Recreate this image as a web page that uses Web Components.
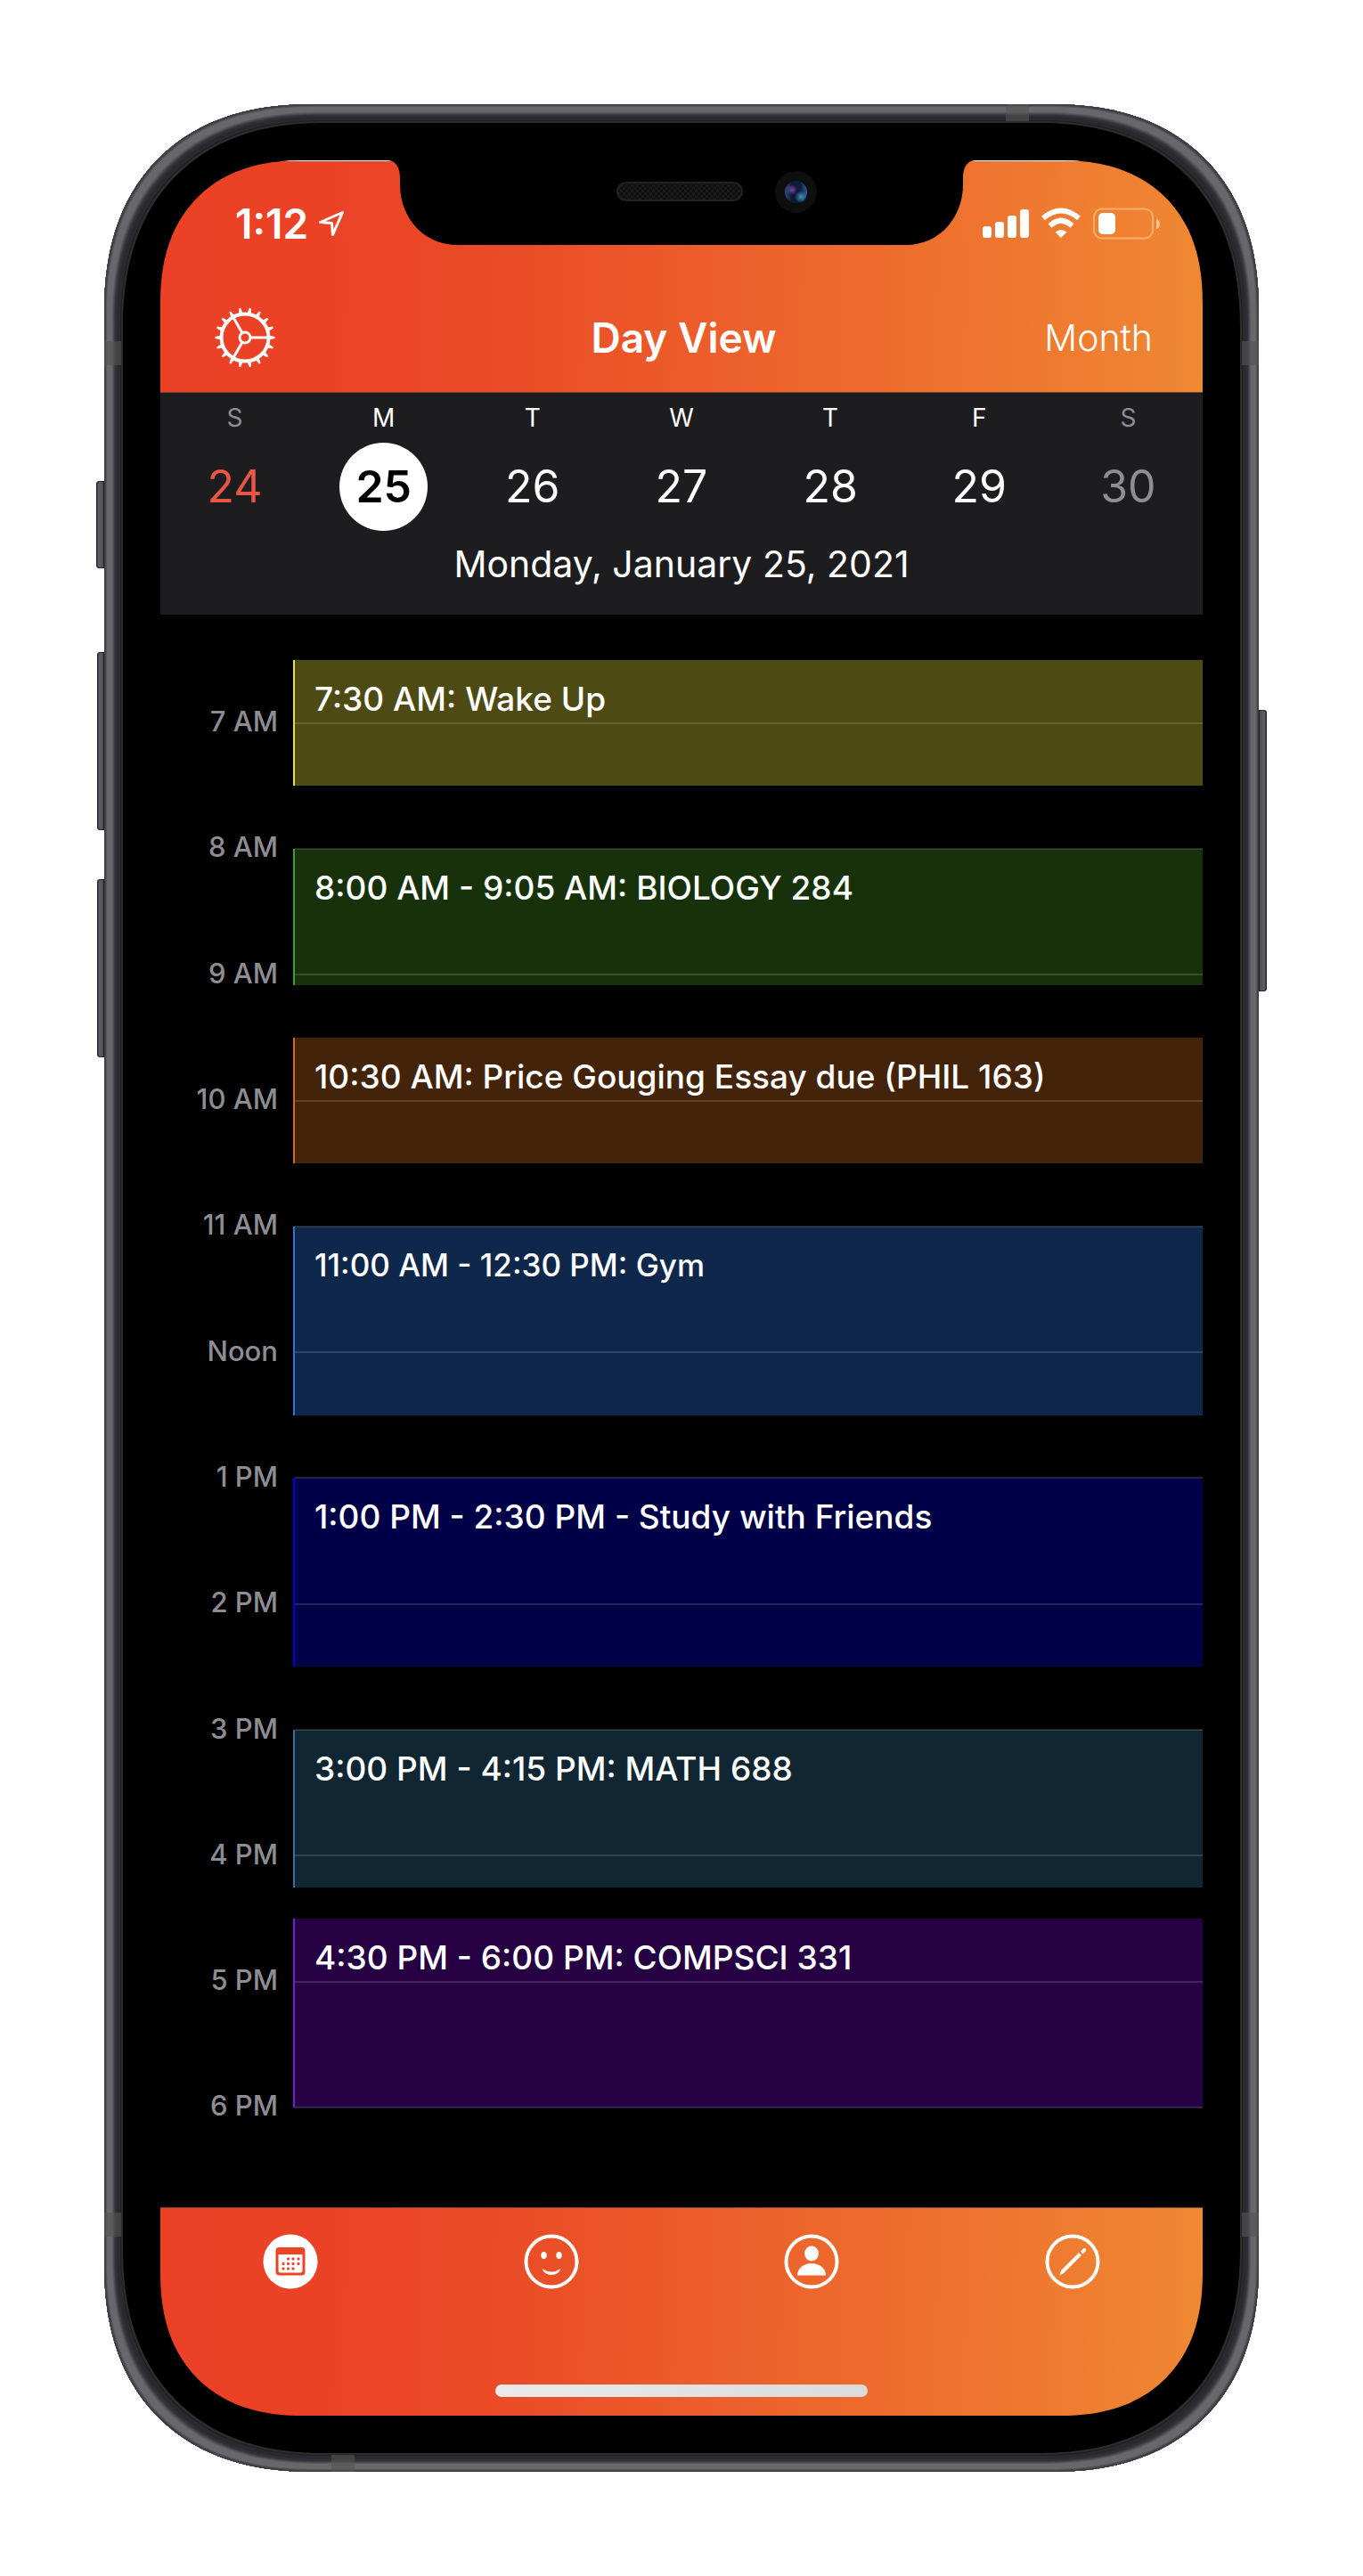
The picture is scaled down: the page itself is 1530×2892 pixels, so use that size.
<!DOCTYPE html>
<html lang="en">
<head>
<meta charset="utf-8">
<meta name="viewport" content="width=device-width, initial-scale=1">
<title>Day View</title>
<style>
  body {
    margin: 0;
    background: #fff;
    font-family: Inter, "Liberation Sans", sans-serif;
    color: #fff;
    --brand: linear-gradient(91deg, #eb4126 0%, #eb4226 16%, #ea4e27 36%, #ec5b2a 50%, #ee722e 76%, #ef8833 100%);
  }
</style>
</head>
<body>
<phone-frame>
  <status-bar time="1:12"></status-bar>
  <nav-bar action="Month">Day View</nav-bar>
  <week-strip first="24" selected="25">Monday, January 25, 2021</week-strip>
  <day-timeline from="6:30" to="18:00">
    <day-event start="6:30" end="7:30" tone="olive">7:30 AM: Wake Up</day-event>
    <day-event start="8:00" end="9:05" tone="green">8:00 AM - 9:05 AM: BIOLOGY 284</day-event>
    <day-event start="9:30" end="10:30" tone="brown">10:30 AM: Price Gouging Essay due (PHIL 163)</day-event>
    <day-event start="11:00" end="12:30" tone="blue" compact>11:00 AM - 12:30 PM: Gym</day-event>
    <day-event start="13:00" end="14:30" tone="navy">1:00 PM - 2:30 PM - Study with Friends</day-event>
    <day-event start="15:00" end="16:15" tone="teal">3:00 PM - 4:15 PM: MATH 688</day-event>
    <day-event start="16:30" end="18:00" tone="purple">4:30 PM - 6:00 PM: COMPSCI 331</day-event>
  </day-timeline>
  <tab-bar></tab-bar>
</phone-frame>

<script>
const mount = (el, html) => { el.attachShadow({ mode: "open" }).innerHTML = html; };
const RESET = `<style>
  :host, * { box-sizing: border-box; }
  button { margin: 0; padding: 0; border: 0; background: none; color: inherit; font: inherit; cursor: pointer; }
  svg { display: block; }
</style>`;
const minutes = t => { const [h, m] = t.split(":").map(Number); return h * 60 + m; };

customElements.define("phone-frame", class extends HTMLElement {
  connectedCallback() {
    mount(this, `${RESET}<style>
      :host { display: block; position: relative; margin: 117px; }
      .body {
        position: relative;
        padding: 63px;
        background: #000;
        border-radius: 206px;
        overflow: hidden;
        box-shadow:
          inset 0 0 0 1px #3b3b3e, inset 0 0 0 2px #48484c, inset 0 0 0 3px #57565b,
          inset 0 0 0 9px #68676c, inset 0 0 0 10px #5b5a5f, inset 0 0 0 11px #4c4b50,
          inset 0 0 0 12px #3e3d43, inset 0 0 0 14px #313037, inset 0 0 0 18px #2a2930,
          inset 0 0 0 19px #1f1f22, inset 0 0 0 21px #2d2c2b;
      }
      .screen {
        display: flex; flex-direction: column;
        background: #000;
        border-radius: 144px;
        overflow: hidden;
      }
      @supports (corner-shape: superellipse(1.2)) {
        .body { border-radius: 234px; corner-shape: superellipse(1.2); }
        .screen { border-radius: 160px; corner-shape: superellipse(1.2); }
      }
      .band { position: absolute; background: #55555599; }
      .band.side { width: 19px; height: 27px; }
      .band.flat { width: 26px; height: 19px; }
      .tl { top: 266px; left: 0; } .tr { top: 266px; right: 0; }
      .bl { bottom: 264px; left: 0; } .br { bottom: 264px; right: 0; }
      .top { top: 0; right: 258px; } .bottom { bottom: 0; left: 255px; }
      .key {
        position: absolute; width: 8px; left: -8px;
        border-radius: 4px 0 0 4px;
        background: linear-gradient(90deg, #2c2b35, #5d5c62 30%, #5d5c62 50%, #434247);
        box-shadow: inset 0 0 0 1px #22212b;
      }
      .mute { top: 423px; height: 98px; width: 9px; left: -9px; }
      .up { top: 615px; height: 200px; }
      .down { top: 870px; height: 200px; }
      .power { top: 680px; height: 316px; width: 9px; left: auto; right: -9px; border-radius: 0 4px 4px 0; background: linear-gradient(270deg, #2c2b35, #5d5c62 30%, #5d5c62 50%, #434247); }
    </style>
    <div class="key mute"></div><div class="key up"></div><div class="key down"></div><div class="key power"></div>
    <div class="body">
      <div class="screen"><slot></slot></div>
      <div class="band side tl"></div><div class="band side tr"></div>
      <div class="band side bl"></div><div class="band side br"></div>
      <div class="band flat top"></div><div class="band flat bottom"></div>
    </div>`);
  }
});

customElements.define("status-bar", class extends HTMLElement {
  connectedCallback() {
    mount(this, `${RESET}<style>
      :host {
        display: grid; grid-template-columns: 1fr 660px 1fr;
        background: linear-gradient(#fff, #fff) top / 100% 1px no-repeat, var(--brand);
      }
      .time { display: flex; align-items: center; gap: 11px; padding: 47px 0 0 84px; font-size: 46px; line-height: 48px; font-weight: 600; }
      .signal { display: flex; align-items: center; padding: 47px 0 0 8px; }
    </style>
    <div class="time"><span>${this.getAttribute("time")}</span>
      <svg width="30" height="30" viewBox="0 0 30 30" fill="none" stroke="#fff" stroke-width="3" stroke-linejoin="round"><path d="M27.500 2.500L2.500 13.500L15.500 14.500L16.500 27.500Z"/></svg>
    </div>
    <svg width="660" height="95" viewBox="0 0 660 95">
      <defs>
        <pattern id="mesh" width="6" height="6" patternUnits="userSpaceOnUse"><rect width="6" height="6" fill="#0f0f0f"/><path d="M0 0h3v3h3v3h-3v-3h-3z" fill="#1a1a1a"/></pattern>
        <radialGradient id="violet"><stop offset="0" stop-color="#7449a8"/><stop offset="1" stop-color="#7449a8" stop-opacity="0"/></radialGradient>
        <radialGradient id="cyan"><stop offset="0" stop-color="#4390b4"/><stop offset="1" stop-color="#4390b4" stop-opacity="0"/></radialGradient>
        <linearGradient id="lens" x1="0" x2="1"><stop offset="0" stop-color="#2b537c"/><stop offset=".3" stop-color="#0e1733"/><stop offset=".7" stop-color="#101c3c"/><stop offset="1" stop-color="#2d5f97"/></linearGradient>
      </defs>
      <path d="M0 0C10 0 14 9 14 20V27C14 66 42 95 78 95H582C618 95 646 66 646 27V20C646 9 650 0 660 0Z"/>
      <rect x="258" y="25" width="140" height="20" rx="10" fill="url(#mesh)" stroke="#222" stroke-width="2"/>
      <circle cx="458.500" cy="35.500" r="23.500" fill="#0e0e0e"/>
      <circle cx="458.500" cy="35.500" r="12.500" fill="url(#lens)"/>
      <circle cx="454" cy="33" r="6" fill="url(#violet)"/>
      <circle cx="464" cy="41" r="7" fill="url(#cyan)"/>
    </svg>
    <div class="signal">
      <svg width="201" height="36" viewBox="0 0 201 36" fill="#fff">
        <rect x="0" y="21" width="10" height="13" rx="3"/><rect x="14" y="16" width="10" height="18" rx="3"/>
        <rect x="28" y="9" width="10" height="25" rx="3"/><rect x="42" y="2" width="10" height="32" rx="3"/>
        <g fill="none" stroke="#fff" stroke-width="6"><path d="M68 12Q88 -5 108 12"/><path d="M75.500 20.500Q88 9 100.500 20.500"/></g>
        <path d="M88 34L81.500 27.500Q88 22.500 94.500 27.500Z"/>
        <rect x="125" y="1.500" width="66" height="33" rx="9" fill="none" stroke="#ffcf90" stroke-opacity=".6" stroke-width="2"/>
        <rect x="130" y="6" width="19" height="24" rx="5"/>
        <path d="M195 12.500Q199 14.500 199 18.500T195 24.500Z" fill="#ffd9a8" fill-opacity=".8"/>
      </svg>
    </div>`);
  }
});

customElements.define("nav-bar", class extends HTMLElement {
  connectedCallback() {
    let teeth = "";
    for (let a = 0; a < 360; a += 20) teeth += `<path d="M60 31.500L67.500 33V35L60 36.500Z" transform="rotate(${a} 34 34)"/>`;
    const spokes = [0, 120, 240].map(a => `<path d="M41 34H60" transform="rotate(${a} 34 34)"/>`).join("");
    mount(this, `${RESET}<style>
      :host { display: grid; grid-template-columns: 1fr auto 1fr; align-items: center; padding: 42px 56px 0 61px; height: 166px; background: var(--brand); border-bottom: 1px solid #7a4a30; }
      h1 { margin: 0; font-size: 46px; line-height: 60px; font-weight: 600; }
      .gear { justify-self: start; }
      .action { justify-self: end; font-size: 41px; line-height: 60px; font-weight: 300; }
    </style>
    <button class="gear" aria-label="Settings"><svg width="68" height="68" viewBox="0 0 68 68" fill="#fff">${teeth}
      <g fill="none" stroke="#fff"><circle cx="34" cy="34" r="26.500" stroke-width="4"/><circle cx="34" cy="34" r="6" stroke-width="3"/><g stroke-width="3">${spokes}</g></g></svg></button>
    <h1><slot></slot></h1>
    <button class="action">${this.getAttribute("action")}</button>`);
  }
});

customElements.define("week-strip", class extends HTMLElement {
  connectedCallback() {
    const first = Number(this.getAttribute("first")), selected = Number(this.getAttribute("selected"));
    const days = [..."SMTWTFS"].map((d, i) => {
      const n = first + i;
      const state = n === selected ? "selected" : i === 0 ? "sunday" : i === 6 ? "saturday" : "";
      return `<button class="${state}"><span class="letter">${d}</span><span class="num">${n}</span></button>`;
    }).join("");
    mount(this, `${RESET}<style>
      :host { display: block; padding: 11px 0 31px; background: #1d1d1f; }
      .days { display: grid; grid-template-columns: repeat(7, 1fr); }
      button { display: flex; flex-direction: column; align-items: center; gap: 11px; }
      .letter { font-size: 28px; line-height: 34px; }
      .num { width: 99px; border-radius: 50%; font-size: 50px; line-height: 99px; text-align: center; }
      .selected .num { background: #fff; color: #000; font-weight: 600; }
      .sunday .letter, .saturday { color: #8e8d94; }
      .sunday .num { color: #eb5545; }
      p { margin: 12px 0 0; text-align: center; font-size: 41px; line-height: 51px; }
    </style>
    <div class="days">${days}</div>
    <p><slot></slot></p>`);
  }
});

customElements.define("day-event", class extends HTMLElement {
  connectedCallback() {
    mount(this, `${RESET}<style>
      :host { display: block; padding: 20px 22px 0; border-left: 2px solid var(--edge); background: var(--fill); font-size: 37px; line-height: 48px; font-weight: 500; white-space: nowrap; overflow: hidden; }
      :host([compact]) { font-size: 35px; line-height: 46px; }
      :host([tone=olive]) { --fill: #4d4b13; --edge: #e4e233; }
      :host([tone=green]) { --fill: #17320b; --edge: #3f9f2a; }
      :host([tone=brown]) { --fill: #43240b; --edge: #d2691e; }
      :host([tone=blue]) { --fill: #0f274b; --edge: #2f73d6; }
      :host([tone=navy]) { --fill: #000049; --edge: #0000e0; }
      :host([tone=teal]) { --fill: #102632; --edge: #3273a3; }
      :host([tone=purple]) { --fill: #250143; --edge: #7a1bdc; }
    </style><slot></slot>`);
  }
});

customElements.define("day-timeline", class extends HTMLElement {
  connectedCallback() {
    const from = minutes(this.getAttribute("from")), to = minutes(this.getAttribute("to"));
    const row = m => (m - from) / 5 + 1;
    for (const ev of this.querySelectorAll("day-event"))
      ev.style.gridArea = `${row(minutes(ev.getAttribute("start")))} / 2 / ${row(minutes(ev.getAttribute("end")))} / 3`;
    let hours = "";
    for (let h = Math.ceil(from / 60); h * 60 <= to; h++) {
      const text = h === 12 ? "Noon" : h < 12 ? `${h} AM` : `${h - 12} PM`;
      hours += `<span class="label" style="grid-row:${row(h * 60)}">${text}</span><i style="grid-row:${row(h * 60)}"></i>`;
    }
    mount(this, `${RESET}<style>
      :host { display: block; padding: 51px 0 111px; background: #000; }
      .grid { display: grid; height: 1626px; grid-template: repeat(${row(to) - 1}, minmax(0, 1fr)) / 132px 1fr; column-gap: 17px; }
      .label { grid-column: 1; justify-self: end; display: flex; align-items: center; height: 0; margin-top: -2px; font-size: 31px; font-weight: 500; color: #8e8d94; }
      i { grid-column: 2; height: 2px; margin: -1px 0 0 2px; background: #ffffff24; }
    </style>
    <div class="grid"><slot></slot>${hours}</div>`);
  }
});

customElements.define("tab-bar", class extends HTMLElement {
  connectedCallback() {
    const dots = [[28.5, 28], [34, 28], [40, 28], [23, 33.5], [28.5, 33.5], [34, 33.5], [40, 33.5], [23, 39], [28.5, 39], [34, 39]]
      .map(([x, y]) => `<rect x="${x - 1.5}" y="${y - 1.5}" width="3" height="3" rx="1"/>`).join("");
    const ring = `<circle cx="31" cy="31" r="28.500" fill="none" stroke="#fff" stroke-width="4"/>`;
    const tabs = {
      Calendar: `<circle cx="31" cy="31" r="30.500"/><g fill="#eb4526"><path fill-rule="evenodd" d="M18.500 15H43.500Q47.500 15 47.500 19V42.500Q47.500 46.500 43.500 46.500H18.500Q14.500 46.500 14.500 42.500V19Q14.500 15 18.500 15ZM17.500 23V41Q17.500 43.500 20 43.500H42Q44.500 43.500 44.500 41V23Z"/>${dots}</g>`,
      Mood: `${ring}<ellipse cx="22.500" cy="24" rx="3.200" ry="4"/><ellipse cx="39.500" cy="24" rx="3.200" ry="4"/><path d="M20.500 39Q31 46 41.500 39Q39 46 31 46T20.500 39Z"/>`,
      Profile: `${ring}<ellipse cx="31" cy="22" rx="8" ry="8.500"/><path d="M15 46.500C15 38 23 33 31 33S47 38 47 46.500Z"/>`,
      Edit: `${ring}<path d="M16.500 46.500L18 41L38 21L41 24L21 44Z"/><path d="M40 19.500L43 16.500Q44.500 15.500 45.800 16.700T45.500 19.500L42.500 22.500Z"/>`
    };
    mount(this, `${RESET}<style>
      :host { display: flex; flex-direction: column; gap: 107px; padding: 29px 0 21px; background: var(--brand); border-top: 1px solid #7a4a30; }
      nav { display: grid; grid-template-columns: repeat(4, 1fr); justify-items: center; }
      .home { align-self: center; width: 418px; height: 14px; border-radius: 7px; background: linear-gradient(90deg, #eaeaea, #dbdbdb); }
    </style>
    <nav>${Object.entries(tabs).map(([name, art]) => `<button aria-label="${name}"><svg width="62" height="62" viewBox="0 0 62 62" fill="#fff">${art}</svg></button>`).join("")}</nav>
    <div class="home"></div>`);
  }
});
</script>
</body>
</html>
